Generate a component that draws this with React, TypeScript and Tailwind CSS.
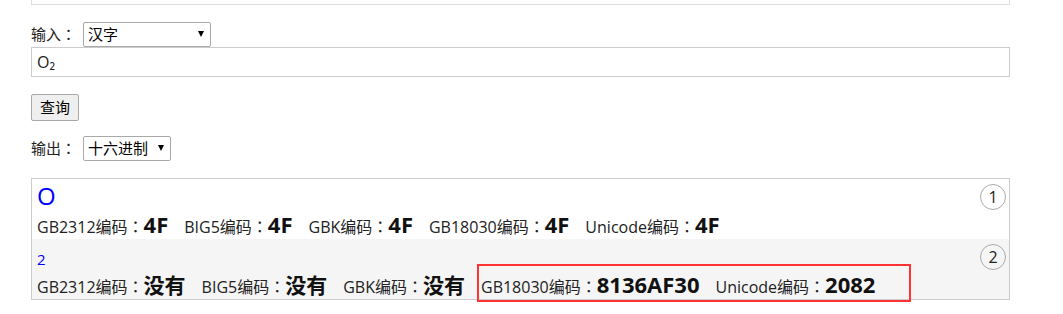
import React from "react";

const FONT = "font-['Open_Sans','Noto_Sans_CJK_SC',sans-serif]";

type Code = { label: string; value: string };

const ROWS: { title: string; big: boolean; codes: Code[] }[] = [
  {
    title: "O",
    big: true,
    codes: [
      { label: "GB2312编码", value: "4F" },
      { label: "BIG5编码", value: "4F" },
      { label: "GBK编码", value: "4F" },
      { label: "GB18030编码", value: "4F" },
      { label: "Unicode编码", value: "4F" },
    ],
  },
  {
    title: "2",
    big: false,
    codes: [
      { label: "GB2312编码", value: "没有" },
      { label: "BIG5编码", value: "没有" },
      { label: "GBK编码", value: "没有" },
      { label: "GB18030编码", value: "8136AF30" },
      { label: "Unicode编码", value: "2082" },
    ],
  },
];

// centred full-width colon, as in the original page font
function Colon() {
  return <span className="font-['Noto_Sans_CJK_JP',sans-serif]">：</span>;
}

function Select({ value, width }: { value: string; width: string }) {
  return (
    <div className={`relative h-[25px] ${width}`}>
      <select
        defaultValue={value}
        className="h-full w-full appearance-none rounded-[2px] border border-[#a9a9a9] bg-white pl-[4px] text-[15px] leading-[23px] text-black outline-none"
      >
        <option>{value}</option>
      </select>
      <span className="pointer-events-none absolute right-[7px] top-[9px] h-0 w-0 border-x-[3px] border-t-[6px] border-x-transparent border-t-black" />
    </div>
  );
}

export default function App() {
  return (
    <div className={`${FONT} min-h-[314px] w-[1063px] bg-white pl-[31px] text-[#222]`}>
      <div className="w-[979px]">
        <div className="h-[5px] border-x border-b border-[#ddd]" />

        <div className="mt-[17px] flex h-[25px] items-center">
          <span className="w-[52px] text-[15px]">
            输入<Colon />
          </span>
          <Select value="汉字" width="w-[128px]" />
        </div>
        <input
          defaultValue="O₂"
          className="block h-[30px] w-full border border-[#ccc] px-[5px] text-[16px] text-[#222] outline-none"
        />

        <button className="mt-[17px] h-[27px] w-[48px] rounded-[2px] border border-[#a9a9a9] bg-[#efefef] text-[15px] text-black">
          查询
        </button>

        <div className="mt-[15px] flex h-[25px] items-center">
          <span className="w-[52px] text-[15px]">
            输出<Colon />
          </span>
          <Select value="十六进制" width="w-[88px]" />
        </div>

        <div className="mt-[17px] border border-[#ccc]">
          {ROWS.map((row, i) => (
            <div key={i} className={`relative px-[5px] pt-[3px] pb-[1px] ${i % 2 ? "bg-[#f5f5f5]" : "bg-white"}`}>
              <span className="absolute right-[3px] top-[5px] flex h-[26px] w-[26px] items-center justify-center rounded-full border border-[#aaa] text-[16px] text-[#222]">
                {i + 1}
              </span>
              <div
                className={`h-[28px] text-[#0000ff] ${row.big ? "text-[24px] leading-[28px]" : "text-[15px] leading-[34px]"}`}
              >
                {row.title}
              </div>
              <div className="flex h-[28px] items-baseline whitespace-nowrap leading-[28px]">
                {row.codes.map((c) => (
                  <span key={c.label} className="mr-[16px]">
                    <span className="text-[16px]">
                      {c.label}
                      <Colon />
                    </span>
                    <b className={`font-bold text-[#111] ${c.value === "没有" ? "text-[21px]" : "text-[22px]"}`}>{c.value}</b>
                  </span>
                ))}
              </div>
              {i === 1 && (
                <span className="pointer-events-none absolute left-[445px] top-[25px] h-[38px] w-[434px] border-2 border-[#ff3333]" />
              )}
            </div>
          ))}
        </div>
      </div>
    </div>
  );
}
